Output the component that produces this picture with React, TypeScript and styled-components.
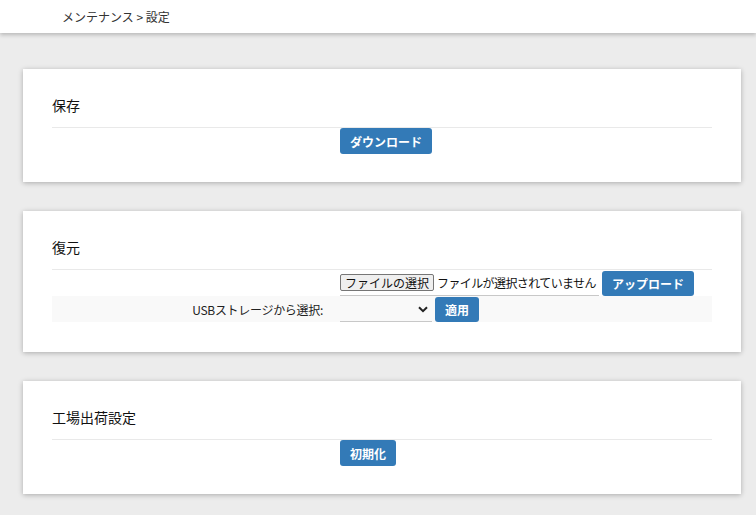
import React from 'react'
import styled, { createGlobalStyle } from 'styled-components'

const GlobalStyle = createGlobalStyle`
    body {
        margin: 0;
        background: #ececec;
        font-family: "Noto Sans CJK JP", "Noto Sans", sans-serif;
        color: #111;
    }
`

const Header = styled.header`
    height: 33px;
    background: #fff;
    box-shadow: 0 2px 4px rgba(0, 0, 0, 0.22);
    display: flex;
    align-items: center;
    padding-left: 62px;
    font-size: 12px;
    color: #333;
`

const Main = styled.main`
    display: flex;
    flex-direction: column;
    gap: 29px;
    padding: 36px 15px 20px 23px;
`

const Card = styled.section<{ $bottom?: number }>`
    background: #fff;
    padding: 24px 29px ${(p) => p.$bottom ?? 28}px;
    box-shadow: 0 1px 5px rgba(0, 0, 0, 0.28);
`

const CardTitle = styled.h2`
    margin: 0;
    font-size: 14px;
    font-weight: 400;
    line-height: 24px;
    padding-bottom: 10px;
    border-bottom: 1px solid #e9e9e9;
`

const Row = styled.div<{ $striped?: boolean }>`
    display: grid;
    grid-template-columns: 288px 1fr;
    align-items: center;
    min-height: 26px;
    background: ${(p) => (p.$striped ? '#f9f9f9' : 'transparent')};
`

const Label = styled.div`
    text-align: right;
    padding-right: 17px;
    font-size: 12px;
    letter-spacing: -0.3px;
    color: #222;
`

const Controls = styled.div`
    display: flex;
    align-items: center;
    gap: 3px;
`

const Button = styled.button<{ $height?: number }>`
    height: ${(p) => p.$height ?? 26}px;
    padding: 0 10px;
    border: none;
    border-radius: 3px;
    background: #337ab7;
    color: #fff;
    font-family: inherit;
    font-size: 12px;
    font-weight: 700;
    cursor: pointer;
`

const FileField = styled.label`
    display: flex;
    align-items: center;
    gap: 3px;
    width: 259px;
    height: 26px;
    box-sizing: border-box;
    border-bottom: 1px solid #c8c8c8;
    font-size: 12px;
    white-space: nowrap;
    overflow: hidden;
`

const FileButton = styled.span`
    height: 17px;
    line-height: 15px;
    box-sizing: border-box;
    padding: 0 4px;
    border: 1px solid #767676;
    border-radius: 2px;
    background: #efefef;
    color: #111;
`

const FileName = styled.span`
    letter-spacing: -0.6px;
    color: #111;
`

const HiddenInput = styled.input`
    display: none;
`

const SelectWrap = styled.div`
    position: relative;
    width: 92px;
    height: 25px;
    border-bottom: 1px solid #c8c8c8;
    box-sizing: border-box;
`

const Select = styled.select`
    appearance: none;
    width: 100%;
    height: 100%;
    border: none;
    background: transparent;
    font-family: inherit;
    font-size: 12px;
    outline: none;
`

const Chevron = styled.svg`
    position: absolute;
    right: 4px;
    top: 9px;
    pointer-events: none;
`

export default function App() {
    return (
        <>
            <GlobalStyle />
            <Header>メンテナンス &gt; 設定</Header>
            <Main>
                <Card>
                    <CardTitle>保存</CardTitle>
                    <Row>
                        <Label />
                        <Controls>
                            <Button>ダウンロード</Button>
                        </Controls>
                    </Row>
                </Card>
                <Card $bottom={30}>
                    <CardTitle>復元</CardTitle>
                    <Row>
                        <Label />
                        <Controls>
                            <FileField>
                                <HiddenInput type="file" />
                                <FileButton>ファイルの選択</FileButton>
                                <FileName>ファイルが選択されていません</FileName>
                            </FileField>
                            <Button $height={25}>アップロード</Button>
                        </Controls>
                    </Row>
                    <Row $striped>
                        <Label>USBストレージから選択:</Label>
                        <Controls>
                            <SelectWrap>
                                <Select defaultValue="">
                                    <option value=""></option>
                                </Select>
                                <Chevron width="10" height="7" viewBox="0 0 10 7">
                                    <path d="M1 1.2 L5 5.2 L9 1.2" fill="none" stroke="#222" strokeWidth="2" />
                                </Chevron>
                            </SelectWrap>
                            <Button $height={25}>適用</Button>
                        </Controls>
                    </Row>
                </Card>
                <Card>
                    <CardTitle>工場出荷設定</CardTitle>
                    <Row>
                        <Label />
                        <Controls>
                            <Button>初期化</Button>
                        </Controls>
                    </Row>
                </Card>
            </Main>
        </>
    )
}
